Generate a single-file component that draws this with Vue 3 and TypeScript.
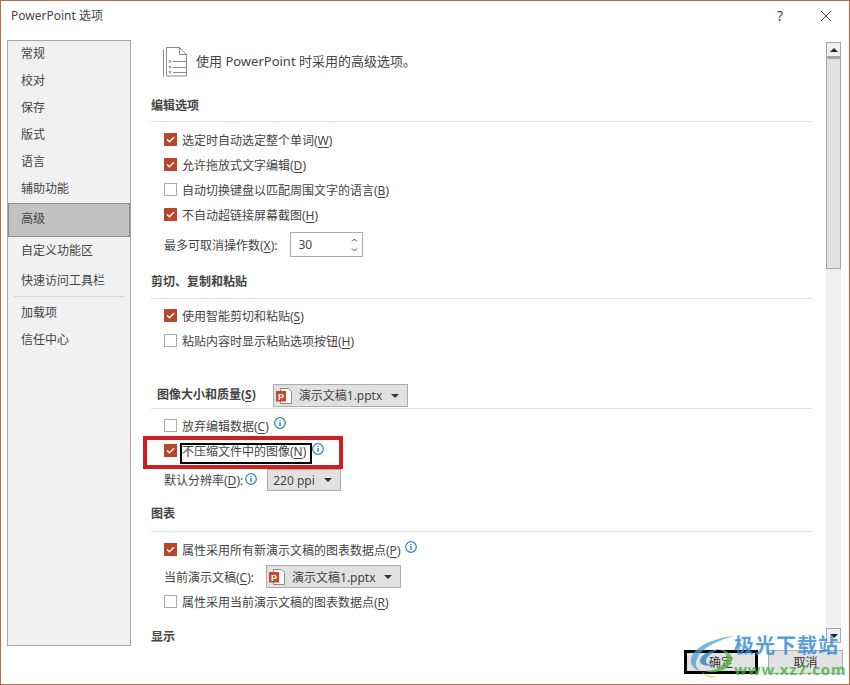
<script setup lang="ts">
interface Nav { label: string; active?: boolean; sepAfter?: boolean }
const nav: Nav[] = [
  { label: '常规' }, { label: '校对' }, { label: '保存' }, { label: '版式' }, { label: '语言' }, { label: '辅助功能' },
  { label: '高级', active: true }, { label: '自定义功能区' }, { label: '快速访问工具栏', sepAfter: true },
  { label: '加载项' }, { label: '信任中心' },
]
const editing = [
  { t: '选定时自动选定整个单词(', k: 'W', on: true },
  { t: '允许拖放式文字编辑(', k: 'D', on: true },
  { t: '自动切换键盘以匹配周围文字的语言(', k: 'B', on: false },
  { t: '不自动超链接屏幕截图(', k: 'H', on: true },
]
const paste = [
  { t: '使用智能剪切和粘贴(', k: 'S', on: true },
  { t: '粘贴内容时显示粘贴选项按钮(', k: 'H', on: false },
]
</script>

<template>
  <div class="window">
    <header class="titlebar">
      <span class="title">PowerPoint 选项</span>
      <span class="help">?</span>
      <svg class="close" width="12" height="12" viewBox="0 0 12 12"><path d="M1 1l10 10M11 1L1 11" stroke="#444" stroke-width="1" fill="none" /></svg>
    </header>

    <div class="body">
      <nav class="sidebar">
        <template v-for="n in nav" :key="n.label">
          <div class="nav" :class="{ active: n.active }">{{ n.label }}</div>
          <div v-if="n.sepAfter" class="navsep"></div>
        </template>
      </nav>

      <main class="main">
        <div class="intro">
          <svg width="25" height="31" viewBox="0 0 25 31" fill="none" stroke="#8a8a8a" stroke-width="1">
            <path d="M.5 2.500v27" />
            <path d="M3.500 28.500V.5h13l7 7v21.500h-20z" />
            <path d="M16.500.5v7h7" />
            <path d="M10 14.500h13M10 20.500h13M10 25.500h13" />
            <circle cx="7" cy="14.500" r="1" /><circle cx="7" cy="20" r="1" /><circle cx="7" cy="25" r="1" />
          </svg>
          <span class="introtext">使用 PowerPoint 时采用的高级选项。</span>
        </div>

        <h3 class="sec first">编辑选项</h3>
        <div v-for="(c, i) in editing" :key="c.t" class="row" :class="{ after: i === 0 }">
          <span class="box" :class="{ on: c.on }"><svg v-if="c.on" width="9" height="7" viewBox="0 0 9 7"><path d="M1 3.500l2.400 2.300L8 1.200" stroke="#fff" stroke-width="1.400" fill="none" /></svg></span>
          <span class="lab">{{ c.t }}<u>{{ c.k }}</u>)</span>
        </div>
        <div class="row plain spinrow">
          <span>最多可取消操作数(<u>X</u>):</span>
          <div class="spin">
            <span>30</span>
            <svg width="7" height="16" viewBox="0 0 7 16" fill="none" stroke="#444"><path d="M1 4.500l2.500-2.500L6 4.500M1 11.500L3.500 14 6 11.500" /></svg>
          </div>
        </div>

        <h3 class="sec cut">剪切、复制和粘贴</h3>
        <div v-for="(c, i) in paste" :key="c.t" class="row" :class="{ after: i === 0 }">
          <span class="box" :class="{ on: c.on }"><svg v-if="c.on" width="9" height="7" viewBox="0 0 9 7"><path d="M1 3.500l2.400 2.300L8 1.200" stroke="#fff" stroke-width="1.400" fill="none" /></svg></span>
          <span class="lab">{{ c.t }}<u>{{ c.k }}</u>)</span>
        </div>

        <h3 class="sec img">
          <span class="imgtitle">图像大小和质量(<u>S</u>)</span>
          <div class="select file imgsel">
            <svg class="ppt" width="18" height="18" viewBox="0 0 18 18">
              <path d="M5.500 1.500h8l3 3v12h-11z" fill="#fff" stroke="#8a8a8a" />
              <rect x="1" y="4" width="10" height="10.500" fill="#c8492a" />
              <text x="6" y="12.500" font-size="9" font-weight="700" fill="#fff" text-anchor="middle" font-family="Liberation Sans">P</text>
            </svg>
            <span class="val">演示文稿1.pptx</span>
            <i class="caret"></i>
          </div>
        </h3>
        <div class="row after">
          <span class="box"></span>
          <span class="lab">放弃编辑数据(<u>C</u>)</span>
          <svg class="info" width="12" height="12" viewBox="0 0 12 12"><circle cx="6" cy="6" r="5.300" fill="#fff" stroke="#2b88b4" stroke-width="1.200" /><path d="M6 3v1M6 5v4" stroke="#2b88b4" stroke-width="1.400" /></svg>
        </div>
        <div class="row focus">
          <div class="redbox"></div>
          <span class="box on"><svg width="9" height="7" viewBox="0 0 9 7"><path d="M1 3.500l2.400 2.300L8 1.200" stroke="#fff" stroke-width="1.400" fill="none" /></svg></span>
          <span class="lab focused">不压缩文件中的图像(<u>N</u>)</span>
          <svg class="info up" width="12" height="12" viewBox="0 0 12 12"><circle cx="6" cy="6" r="5.300" fill="#fff" stroke="#2b88b4" stroke-width="1.200" /><path d="M6 3v1M6 5v4" stroke="#2b88b4" stroke-width="1.400" /></svg>
        </div>
        <div class="row plain res">
          <span>默认分辨率(<u>D</u>):</span>
          <svg class="info near" width="12" height="12" viewBox="0 0 12 12"><circle cx="6" cy="6" r="5.300" fill="#fff" stroke="#2b88b4" stroke-width="1.200" /><path d="M6 3v1M6 5v4" stroke="#2b88b4" stroke-width="1.400" /></svg>
          <div class="select ppi"><span class="val">220 ppi</span><i class="caret"></i></div>
        </div>

        <h3 class="sec chart">图表</h3>
        <div class="row after">
          <span class="box on"><svg width="9" height="7" viewBox="0 0 9 7"><path d="M1 3.500l2.400 2.300L8 1.200" stroke="#fff" stroke-width="1.400" fill="none" /></svg></span>
          <span class="lab">属性采用所有新演示文稿的图表数据点(<u>P</u>)</span>
          <svg class="info" width="12" height="12" viewBox="0 0 12 12"><circle cx="6" cy="6" r="5.300" fill="#fff" stroke="#2b88b4" stroke-width="1.200" /><path d="M6 3v1M6 5v4" stroke="#2b88b4" stroke-width="1.400" /></svg>
        </div>
        <div class="row plain cur">
          <span>当前演示文稿(<u>C</u>):</span>
          <div class="select file cursel">
            <svg class="ppt" width="18" height="18" viewBox="0 0 18 18">
              <path d="M5.500 1.500h8l3 3v12h-11z" fill="#fff" stroke="#8a8a8a" />
              <rect x="1" y="4" width="10" height="10.500" fill="#c8492a" />
              <text x="6" y="12.500" font-size="9" font-weight="700" fill="#fff" text-anchor="middle" font-family="Liberation Sans">P</text>
            </svg>
            <span class="val">演示文稿1.pptx</span>
            <i class="caret"></i>
          </div>
        </div>
        <div class="row">
          <span class="box"></span>
          <span class="lab">属性采用当前演示文稿的图表数据点(<u>R</u>)</span>
        </div>

        <h3 class="sec last">显示</h3>
      </main>

      <aside class="scrollbar">
        <div class="sbtn"><i class="tri up"></i></div>
        <div class="thumb"></div>
        <div class="track"></div>
        <div class="sbtn"><i class="tri"></i></div>
      </aside>
    </div>

    <footer class="footer">
      <button class="btn ok">确定</button>
      <button class="btn cancel">取消</button>
    </footer>

    <div class="watermark">
      <svg class="wmlogo" width="50" height="44" viewBox="0 0 50 44" fill="none">
        <path d="M44 1C24 3 3 12 1 24c-1 6 3 10 9 12-4-3-5-7-3-12C10 14 26 6 44 1z" fill="#4a9fd8" opacity=".75" />
        <path d="M30 14C20 15 11 20 10 25c-1 4 5 7 14 5-6 0-9-2-8-5 1-4 7-8 14-11z" fill="#2f7fc4" opacity=".8" />
        <path d="M30 15c7 2 9 8 5 13-4 5-13 8-21 8 10 3 23 0 27-8 3-6-2-13-11-13z" fill="#55b848" opacity=".85" />
        <path d="M11 36c4 4 10 6 16 5-5 3-12 1-16-5z" fill="#e8c93c" opacity=".8" />
      </svg>
      <div class="wmtext">
        <div class="wmcn">极光下载站</div>
        <div class="wmen">www.xz7.com</div>
      </div>
    </div>
  </div>
</template>

<style>
html, body { margin: 0; background: #fff; }
</style>

<style scoped>
.window {
  position: relative;
  box-sizing: border-box;
  width: 850px;
  height: 685px;
  border: 1px solid #b5694e;
  background: #fff;
  overflow: hidden;
  font-family: "Noto Sans", "Noto Sans CJK SC", sans-serif;
  font-size: 12px;
  color: #444;
  display: flex;
  flex-direction: column;
}
u { text-underline-offset: 2px; }
.titlebar { height: 39px; flex: none; display: flex; align-items: center; padding: 0 17px 9px 10px; box-sizing: border-box; }
.title { flex: 1; font-size: 12px; margin-top: -2px; }
.help { font-size: 14px; margin-right: 37px; margin-top: -2px; }
.body { flex: none; height: 606px; display: flex; padding-left: 6px; }
.sidebar {
  box-sizing: border-box; width: 124px; height: 606px; flex: none;
  background: #f1f1f1; border: 1px solid #a6a6a6; padding-top: 0;
}
.nav { height: 27px; line-height: 25px; padding-left: 13px; }
.nav.active {
  height: 34px; line-height: 29px; background: #c2c2c2;
  border: 1px solid #8a8a8a; box-sizing: border-box; padding-left: 12px; width: 122px;
}
.nav.active + .nav { height: 31px; line-height: 27px; }
.navsep { height: 1px; background: #d5d5d5; margin: 1px 6px 3px 6px; }
.main { flex: 1; min-width: 0; box-sizing: border-box; padding: 0 14px 0 20px; overflow: hidden; height: 606px; }
.intro { display: flex; align-items: center; gap: 9px; margin: 7px 0 0 12px; height: 30px; font-size: 13px; }
.introtext { margin-top: -4px; margin-left: -1px; }
.sec { margin: 0; font-size: 12px; font-weight: 700; color: #444; border-bottom: 1px solid #e1e1e1; height: 27px; line-height: 23px; box-sizing: content-box; }
.sec.first { margin-top: 17px; }
.sec.cut { margin-top: 13px; line-height: 21px; }
.sec.img { margin-top: 31px; height: 24px; display: flex; align-items: flex-start; padding-left: 6px; }
.imgtitle { line-height: 22px; }
.sec.chart { margin-top: 7px; line-height: 20px; }
.sec.last { margin-top: 11px; border-bottom: 0; }
.row { height: 25px; display: flex; align-items: center; padding-left: 13px; position: relative; }
.after { margin-top: 5px; }
.cut ~ .after { margin-top: 4px; }
.chart ~ .after { margin-top: 5px; }
.box { width: 13px; height: 13px; box-sizing: border-box; border: 1px solid #ababab; background: #fff; display: flex; align-items: center; justify-content: center; flex: none; }
.box.on { background: #b7472a; border-color: #b7472a; }
.lab { margin-left: 5px; white-space: nowrap; }
.plain { white-space: nowrap; }
.spinrow { height: 27px; margin-top: 4px; }
.spin { width: 73px; height: 25px; box-sizing: border-box; border: 1px solid #ababab; margin-left: 13px; display: flex; align-items: center; justify-content: space-between; padding: 0 4px 0 7px; }
.select { background: #e1e1e1; border: 1px solid #adadad; box-sizing: border-box; display: flex; align-items: center; font-weight: 400; white-space: nowrap; }
.file { width: 135px; height: 23px; padding: 0 7px 0 1px; font-size: 12px; }
.imgsel { margin-left: 17px; }
.ppt { margin-right: 6px; flex: none; }
.val { flex: 1; }
.caret { width: 0; height: 0; border: 4px solid transparent; border-top: 4px solid #333; border-bottom: 0; margin-right: 1px; }
.info { margin-left: 5px; margin-top: -5px; flex: none; }
.info.up { margin-left: 0; margin-top: -3px; }
.info.near { margin-left: 2px; margin-top: -3px; }
.focus { position: relative; }
.redbox { position: absolute; left: -8px; top: -2px; width: 192px; height: 25px; border: 4px solid #cf1d24; pointer-events: none; box-sizing: content-box; }
.focused { margin-left: 3px; margin-top: 6px; border: 2px solid #000; padding: 0 4px 0 0; height: 17px; line-height: 14px; position: relative; }
.res { height: 34px; }
.ppi { width: 74px; height: 22px; margin-left: 10px; padding: 0 7px 0 5px; }
.cur { height: 27px; padding-top: 2px; box-sizing: border-box; }
.cursel { margin-left: 12px; }
.scrollbar { width: 15px; height: 601px; flex: none; margin: 2px 8px 0 0; background: #f0f0f0; display: flex; flex-direction: column; }
.sbtn { height: 15px; flex: none; box-sizing: border-box; border: 1px solid #a6a6a6; background: #f0f0f0; display: flex; align-items: center; justify-content: center; }
.thumb { height: 212px; flex: none; box-sizing: border-box; background: #e1e1e1; border: 1px solid #a6a6a6; border-top-width: 2px; }
.track { flex: 1; }
.tri { width: 0; height: 0; border: 4px solid transparent; border-top: 4px solid #222; border-bottom: 0; }
.tri.up { border-top: 0; border-bottom: 4px solid #222; }
.footer { flex: 1; display: flex; justify-content: flex-end; align-items: flex-start; padding: 4px 6px 0 0; gap: 10px; }
.btn { font: inherit; color: #333; width: 74px; height: 24px; padding: 0; background: #e1e1e1; border: 1px solid #adadad; box-sizing: border-box; }
.ok { border: 3px solid #000; }
.cancel { width: 75px; }
.watermark { position: absolute; left: 689px; top: 634px; width: 160px; height: 50px; pointer-events: none; }
.wmlogo { position: absolute; left: 0; top: 0; }
.wmtext { position: absolute; left: 44px; top: 0; white-space: nowrap; }
.wmcn { font-size: 20px; font-weight: 700; color: #3b8fd6; line-height: 22px; letter-spacing: 1px; opacity: .85; }
.wmen { font-size: 15px; font-weight: 700; color: #4cb04a; line-height: 18px; margin-top: 3px; letter-spacing: .9px; opacity: .8; }
</style>
